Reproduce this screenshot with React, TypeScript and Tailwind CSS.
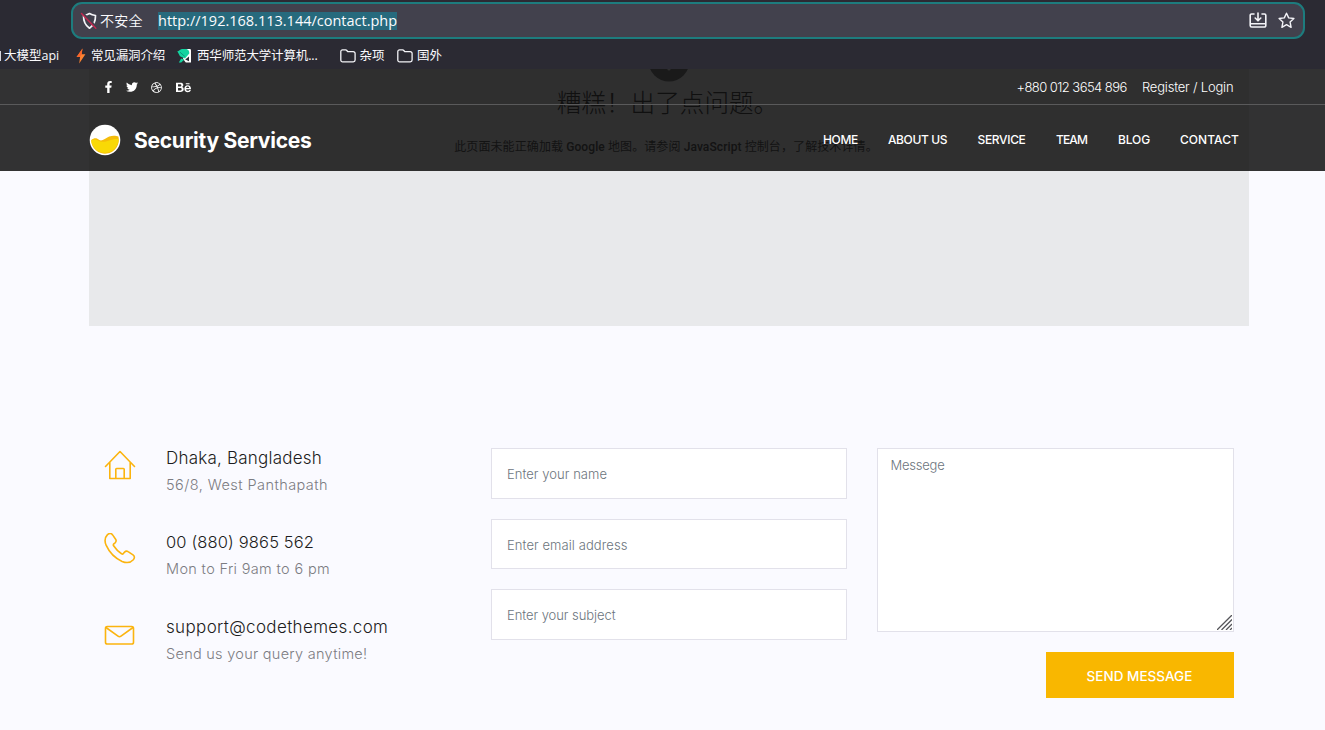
import type { ReactNode } from 'react';
import { FaFacebookF, FaTwitter, FaDribbble, FaBehance } from 'react-icons/fa';

const uiFont = "font-['Open_Sans','Noto_Sans_CJK_SC',sans-serif]";

function Folder() {
  return (
    <svg width="16" height="14" viewBox="0 0 16 14" fill="none" stroke="#f4f4f8" strokeWidth="1.3" strokeLinejoin="round" className="-mt-[2px]">
      <path d="M.8 2.6A1.7 1.7 0 0 1 2.5.9h3.1c.5 0 .9.2 1.2.6l.9 1.2h5.6A1.8 1.8 0 0 1 15.100 4.500v6.600a1.800 1.800 0 0 1-1.800 1.800H2.600A1.800 1.800 0 0 1 .8 11.100z" />
    </svg>
  );
}

function BrowserChrome() {
  return (
    <div className={`h-[69px] bg-[#2b2a33] pt-[2px] text-[#fbfbfe] ${uiFont}`}>
      <div className="ml-[71px] flex h-[37px] w-[1234px] items-center rounded-[11px] border-2 border-[#1d7c7e] bg-[#42414d] pr-[8px] pl-[7px]">
        <svg width="18" height="18" viewBox="0 0 18 18" fill="none">
          <path d="M9.500 1.500c2 1.200 3.800 1.700 6 2 .1 5.500-1.600 9.800-6 12.700C5.100 13.300 3.400 9 3.500 3.500c2.200-.3 4-.8 6-2z" stroke="#f4f4f8" strokeWidth="1.700" strokeLinejoin="round" />
          <path d="M2.500 1.200 17 16.200" stroke="#42414d" strokeWidth="2.600" />
          <path d="M1.500 1.500 15.800 16.300" stroke="#c3274f" strokeWidth="1.500" strokeLinecap="round" />
        </svg>
        <span className="ml-[2px] w-[58px] text-[14px] leading-5 font-[350] tracking-[0.2px] whitespace-nowrap">不安全</span>
        <span className="bg-[#276a7d] text-[14.500px] leading-[18px] whitespace-nowrap">http://192.168.113.144/contact.php</span>
        <div className="ml-auto flex items-center gap-[11px]">
          <svg width="18" height="17" viewBox="0 0 18 17" fill="none" stroke="#f4f4f8" strokeWidth="1.600" strokeLinecap="round" strokeLinejoin="round">
            <path d="M5 2H2.500A1.300 1.300 0 0 0 1.200 3.300v10.200a1.500 1.500 0 0 0 1.500 1.500h12.600a1.500 1.500 0 0 0 1.500-1.500V3.300A1.300 1.300 0 0 0 15.500 2H13M1.500 11.800h15M9 1v7.500M6.200 6 9 8.800 11.800 6" />
          </svg>
          <svg width="17" height="17" viewBox="0 0 17 17" fill="none" stroke="#f4f4f8" strokeWidth="1.400" strokeLinejoin="round">
            <path d="m8.500 1.200 2.200 4.700 5.200.6-3.800 3.600 1 5.200-4.600-2.600-4.600 2.600 1-5.200L1.100 6.500l5.200-.6z" />
          </svg>
        </div>
      </div>
      <div className="flex h-[30px] items-center pt-[5px] text-[12.500px] whitespace-nowrap">
        <span className="-mt-[2px] h-[10px] w-px bg-[#d8d8de]" />
        <span className="ml-[3px] w-[72px]">大模型api</span>
        <svg width="10" height="16" viewBox="0 0 10 16" className="-mt-[2px]">
          <path d="M6.500.5.600 9h3.500L3.200 15.500 9.400 6.300H5.600z" fill="#fb8332" />
          <path d="M6.500.5.600 9h3.500l1.500-2.700z" fill="#f9652b" />
        </svg>
        <span className="ml-[5px] w-[86px] tracking-[-0.150px]">常见漏洞介绍</span>
        <svg width="15" height="16" viewBox="0 0 15 16" className="-mt-[2px]">
          <path d="M8.500 1h4.300A1.200 1.200 0 0 1 14 2.200V14.500H8.800L6 11z" fill="#fff" />
          <path d="M8.200 11.500 12 8.600v4.600z" fill="#2b2a33" />
          <path d="M.3 3.300C2.200 3.300 2.800 1.300 5 1h4.500c2.300.8 3 2.600 2.800 4.600L8 10.500 5.700 9.500 3 8.200z" fill="#13d3a0" />
          <path d="m1.800 14.500 2.400-4 3 1.300-3 2.700z" fill="#13d3a0" />
          <path d="M3 4.200 7.800 8.500" stroke="#0b8e78" strokeWidth=".9" />
        </svg>
        <span className="ml-[5px] w-[142.500px] tracking-[-0.150px]">西华师范大学计算机...</span>
        <Folder />
        <span className="ml-[4px] w-[37.500px]">杂项</span>
        <Folder />
        <span className="ml-[4px]">国外</span>
      </div>
    </div>
  );
}

function Logo() {
  return (
    <svg width="32" height="32" viewBox="0 0 32 32">
      <circle cx="16" cy="16" r="15.300" fill="#fff" />
      <path d="M2.200 16c3-2.200 5.500-2.200 8 0 3 1.600 6-1.500 10-3.400 4-1.700 7-.8 9.200 0A13.800 13.800 0 1 1 2.200 16z" fill="#f5bd0b" />
      <path d="M2.100 16.500c4-2.600 7 .4 10.500 1.200 5 .8 9.500-3.500 17-2.700A13.800 13.800 0 0 1 2.100 16.500z" fill="#f9d906" />
    </svg>
  );
}

const nav = [
  { label: 'HOME', cls: 'w-[65px] tracking-[-0.33px]' },
  { label: 'ABOUT US', cls: 'w-[89.500px] tracking-[-0.39px]' },
  { label: 'SERVICE', cls: 'w-[78.500px] tracking-[-0.34px]' },
  { label: 'TEAM', cls: 'w-[62px] tracking-[-0.85px]' },
  { label: 'BLOG', cls: 'w-[62px] tracking-[-0.12px]' },
  { label: 'CONTACT', cls: 'w-[59px] tracking-[0.06px]' },
];

function SiteHeader() {
  return (
    <header className="absolute inset-x-0 top-0 h-[102px] bg-[#000000cc] text-white">
      <div className="flex h-[36px] items-center border-b border-[#5a5a5b] pr-[91px] pl-[103px]">
        <div className="flex items-center pt-px text-[12px]">
          <FaFacebookF className="w-[11px]" />
          <FaTwitter className="ml-[11.500px]" />
          <FaDribbble className="ml-[13.500px] text-[11px]" />
          <FaBehance className="ml-[13.500px] text-[15px]" />
        </div>
        <div className="ml-auto flex pt-[2px] text-[13px] font-[350] whitespace-nowrap">
          <span className="w-[125.500px] tracking-[-0.560px]">+880 012 3654 896</span>
          <span className="w-[92px] tracking-[-0.200px]">Register / Login</span>
        </div>
      </div>
      <div className="flex h-[66px] items-center pt-[3px] pl-[89px]">
        <Logo />
        <span className="mt-[2px] ml-[13px] text-[21px] font-bold tracking-[-0.260px]">Security Services</span>
        <nav className="ml-auto flex pt-px pr-[86px] text-[12px] font-medium whitespace-nowrap">
          {nav.map((n) => (
            <a key={n.label} className={n.cls}>{n.label}</a>
          ))}
        </nav>
      </div>
    </header>
  );
}

function MapError() {
  return (
    <div className="mr-[76px] ml-[89px] h-[257px] overflow-hidden bg-[#e8e9eb] text-center font-['Roboto','Noto_Sans_CJK_SC',sans-serif]">
      <div className="flex h-[13px] items-end justify-center">
        <svg width="40" height="13" viewBox="0 0 40 13">
          <circle cx="20" cy="-8" r="20.500" fill="#808080" />
          <circle cx="20" cy="0" r="1.600" fill="#e8e9eb" />
        </svg>
      </div>
      <p className="mt-[4px] mr-[3px] text-[24.600px] leading-[36px] font-light text-[#505050]">糟糕！出了点问题。</p>
      <p className="mt-[15px] -ml-[6px] text-[12px] leading-5 tracking-[0.100px] whitespace-nowrap text-[#606060]">
        此页面未能正确加载 <b className="font-medium">Google</b> 地图。请参阅 <b className="font-medium">JavaScript</b> 控制台，了解技术详情。
      </p>
    </div>
  );
}

function HomeIcon() {
  return (
    <path d="M1.500 17.500 16 2.500 30.500 17.500M5.800 13.500V29.500H26.200V13.500M11.800 29.500V20.300a.8.8 0 0 1 .8-.8h6.800a.8.8 0 0 1 .8.8V29.500" />
  );
}
function PhoneIcon() {
  return (
    <path d="M3.500 1.600C5.500-.1 7.200.1 8.600 1.900l3 4.300c.9 1.400.7 2.500-.5 3.600l-1.300 1.100c-.6.6-.6 1.200-.2 1.900 2.100 3.200 4.700 5.900 7.900 7.900.7.500 1.400.4 1.900-.2l1.200-1.400c1-1.100 2.200-1.300 3.500-.4l4.900 3.200c1.700 1.300 1.900 2.900.3 4.800-2.900 3.200-6.800 3.500-11.200 1.700C10.800 25.200 5.300 19.300 2.100 12.200.4 8.100.6 4.600 3.500 1.600z" />
  );
}
function MailIcon() {
  return (
    <>
      <rect x="1.500" y="8.500" width="28" height="17.500" rx="1.800" />
      <path d="M2 9.500 14 18.200c1 .7 2 .7 3 0L29 9.500" />
    </>
  );
}

const info: { icon: ReactNode; title: string; sub: string; tc: string; sc: string; row: string }[] = [
  { icon: <HomeIcon />, title: 'Dhaka, Bangladesh', sub: '56/8, West Panthapath', tc: 'tracking-[0.22px]', sc: 'tracking-[0.44px]', row: 'h-[84px]' },
  { icon: <PhoneIcon />, title: '00 (880) 9865 562', sub: 'Mon to Fri 9am to 6 pm', tc: 'tracking-[0.14px]', sc: 'tracking-[0.34px]', row: 'h-[85px]' },
  { icon: <MailIcon />, title: 'support@codethemes.com', sub: 'Send us your query anytime!', tc: 'tracking-[0.35px]', sc: 'tracking-[0.280px]', row: 'h-[84px]' },
];

const titleSize = ['text-[17px]', 'text-[16.500px]', 'text-[17px]'];

const fieldBox = 'block w-full rounded-none border border-[#e2e1ea] bg-white text-[13px] font-light text-[#222] outline-none placeholder:text-[#6c757d]';

export default function App() {
  return (
    <div className="h-[730px] w-[1325px] overflow-hidden bg-[#fafaff] font-['Inter','Noto_Sans_CJK_SC',sans-serif]">
      <BrowserChrome />
      <div className="relative">
        <MapError />
        <SiteHeader />
      </div>
      <main className="flex pt-[122px] pl-[104px]">
        <section className="w-[387px]">
          {info.map((it, i) => (
            <div key={it.title} className={`flex ${it.row}`}>
              <svg className="mt-px shrink-0" width="32" height="32" viewBox="0 0 32 32" fill="none" stroke="#fbb40f" strokeWidth="1.600" strokeLinejoin="round" strokeLinecap="round">
                {it.icon}
              </svg>
              <div className="-mt-[4px] ml-[30px] whitespace-nowrap">
                <h3 className={`leading-[28px] font-light text-[#1c1c20] ${titleSize[i]} ${it.tc}`}>{it.title}</h3>
                <p className={`text-[14.500px] leading-[25px] font-light text-[#7c7c82] ${it.sc}`}>{it.sub}</p>
              </div>
            </div>
          ))}
        </section>
        <form className="flex gap-[30px]">
          <div className="flex w-[356px] flex-col gap-[20px]">
            <input className={`${fieldBox} h-[50.500px] px-[15px] pt-[2px] tracking-[0.040px]`} placeholder="Enter your name" />
            <input className={`${fieldBox} h-[50.500px] px-[15px] pt-[2px] tracking-[0.080px]`} placeholder="Enter email address" />
            <input className={`${fieldBox} h-[50.500px] px-[15px] pt-[2px] tracking-[-0.060px]`} placeholder="Enter your subject" />
          </div>
          <div className="flex w-[356.500px] flex-col items-end">
            <div className="relative w-full">
              <textarea className={`${fieldBox} h-[184px] resize-none px-[12.500px] py-[6px] leading-[20px] tracking-[-0.220px]`} placeholder="Messege" />
              <svg className="absolute right-[2px] bottom-[2px]" width="15" height="15" viewBox="0 0 15 15" stroke="#55555a" strokeWidth="1.300">
                <path d="M0 15 15 0M4.500 15 15 4.500M9 15l6-6M13 15l2-2" />
              </svg>
            </div>
            <button type="button" className="mt-[20px] h-[46px] w-[188px] bg-[#f9b700] pt-[2px] text-[13.500px] font-medium tracking-[0.020px] text-white">SEND MESSAGE</button>
          </div>
        </form>
      </main>
    </div>
  );
}
